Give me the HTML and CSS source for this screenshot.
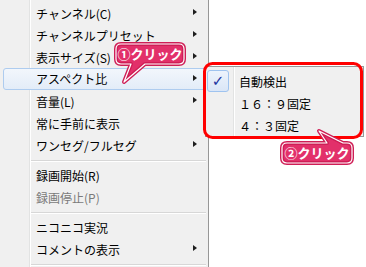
FILE: index.html
```html
<!DOCTYPE html>
<html>
    <head>
        <title>Aspect menu</title>
<link rel="stylesheet" href="styles.css">
    </head>

    <body>
        <div class="screen">
            <div class="menu">
                <div class="item sub">チャンネル(C)</div>
                <div class="item sub">チャンネルプリセット</div>
                <div class="item sub">表示サイズ(S)</div>
                <div class="item sub active">アスペクト比</div>
                <div class="item sub">音量(L)</div>
                <div class="item">常に手前に表示</div>
                <div class="item sub">ワンセグ/フルセグ</div>
                <div class="sep"></div>
                <div class="item">録画開始(R)</div>
                <div class="item disabled">録画停止(P)</div>
                <div class="sep"></div>
                <div class="item">ニコニコ実況</div>
                <div class="item sub">コメントの表示</div>
                <div class="sep"></div>
            </div>

            <div class="submenu">
                <div class="sub-item">
                    <span class="check checked">&#10003;</span>
                    <span>自動検出</span>
                </div>
                <div class="sub-item">
                    <span class="check"></span>
                    <span>１６：９固定</span>
                </div>
                <div class="sub-item">
                    <span class="check"></span>
                    <span>４：３固定</span>
                </div>
            </div>

            <svg class="notes" width="366" height="267" viewBox="0 0 366 267">
                <rect x="204.5" y="63.5" width="157" height="74" rx="8" fill="none" stroke="#ff0000" stroke-width="3"/>

                <path class="bubble-edge" d="M121,44 H179 Q184,44 184,49 V59 Q184,64 179,64 H145 L124,82 L131,64 H121 Q116,64 116,59 V49 Q116,44 121,44 Z"/>
                <path class="bubble-line" d="M121,44 H179 Q184,44 184,49 V59 Q184,64 179,64 H145 L124,82 L131,64 H121 Q116,64 116,59 V49 Q116,44 121,44 Z"/>
                <text class="bubble-text" x="150" y="58.5">①クリック</text>

                <path class="bubble-edge" d="M287,143 H327 L319,131 L343,143 H347 Q352,143 352,148 V158 Q352,163 347,163 H287 Q282,163 282,158 V148 Q282,143 287,143 Z"/>
                <path class="bubble-line" d="M287,143 H327 L319,131 L343,143 H347 Q352,143 352,148 V158 Q352,163 347,163 H287 Q282,163 282,158 V148 Q282,143 287,143 Z"/>
                <text class="bubble-text" x="317" y="157.5">②クリック</text>
            </svg>
        </div>
    </body>
</html>
```

FILE: styles.css
```css
body {
    margin: 0;
    background: #ffffff;
    font-family: "Noto Sans CJK JP", "Noto Sans", sans-serif;
    font-size: 12px;
    color: #000000;
}

.screen {
    position: relative;
    width: 366px;
    height: 267px;
    overflow: hidden;
}

/* main context menu */
.menu {
    width: 209px;
    height: 267px;
    padding-top: 2px;
    box-sizing: border-box;
    border-right: 1px solid #979797;
    background: linear-gradient(to right, #f0f0f0 29px, #e2e3e3 29px, #e2e3e3 30px, #ffffff 30px, #ffffff 31px, #f0f0f0 31px);
}

.item {
    position: relative;
    height: 22px;
    line-height: 22px;
    margin: 0 2px 0 3px;
    padding-left: 32px;
    box-sizing: border-box;
    border: 1px solid transparent;
    border-radius: 3px;
    white-space: nowrap;
}

.item.sub::after {
    content: "";
    position: absolute;
    right: 8px;
    top: 6px;
    border-left: 4px solid #1e1e1e;
    border-top: 3.5px solid transparent;
    border-bottom: 3.5px solid transparent;
}

.item.active {
    border-color: #aeccef;
    background: linear-gradient(#f2f6fc, #e3ecf8);
    line-height: 20px;
}

.item.disabled {
    color: #7a7a7a;
}

.sep {
    height: 8px;
    margin: 0 2px 0 31px;
    background: linear-gradient(#f0f0f0 4px, #d7d7d7 4px, #d7d7d7 5px, #ffffff 5px, #ffffff 6px, #f0f0f0 6px);
}

/* aspect submenu */
.submenu {
    position: absolute;
    left: 205px;
    top: 66px;
    width: 159px;
    padding: 3px 1px 0 1px;
    box-sizing: border-box;
    border: 1px solid #979797;
    background: linear-gradient(to right, #f0f0f0 27px, #e2e3e3 27px, #e2e3e3 28px, #ffffff 28px, #ffffff 29px, #f0f0f0 29px);
}

.sub-item {
    display: flex;
    align-items: center;
    gap: 10px;
    height: 22px;
    white-space: nowrap;
}

.check {
    width: 22px;
    height: 22px;
    box-sizing: border-box;
    flex-shrink: 0;
    text-align: center;
    line-height: 20px;
    font-family: "DejaVu Sans", sans-serif;
    font-size: 15px;
    font-weight: bold;
    color: #1d35a0;
}

.check.checked {
    border: 1px solid #9fc3ef;
    border-radius: 3px;
    background: linear-gradient(#edf3fc, #dae6f7);
}

/* annotations */
.notes {
    position: absolute;
    left: 0;
    top: 0;
    pointer-events: none;
}

.bubble-edge {
    fill: #e2306a;
    stroke: #cf1e56;
    stroke-width: 4;
    stroke-linejoin: round;
}

.bubble-line {
    fill: none;
    stroke: #ffffff;
    stroke-width: 1.2;
    stroke-linejoin: round;
}

.bubble-text {
    fill: #ffffff;
    font-family: "Noto Sans CJK JP", sans-serif;
    font-size: 13px;
    font-weight: bold;
    text-anchor: middle;
}
```
